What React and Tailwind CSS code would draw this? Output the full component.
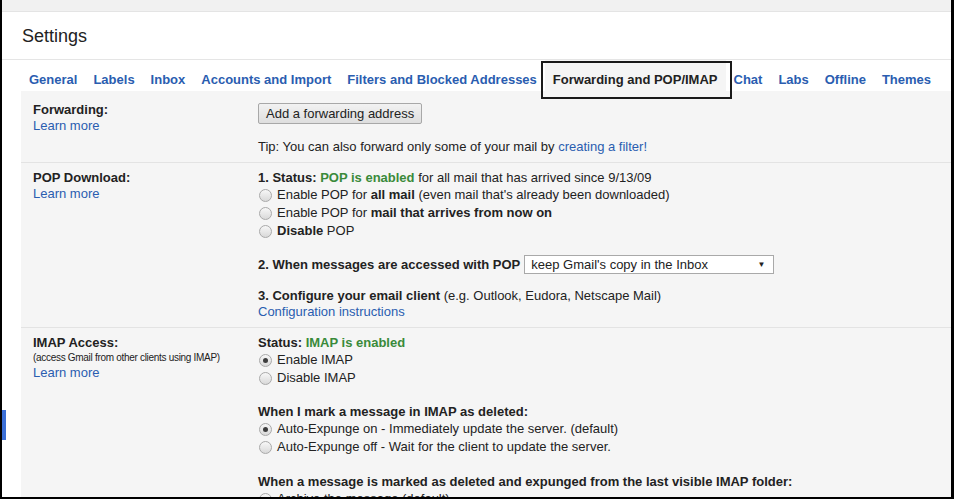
import React from 'react'

const tabs = [
  'General',
  'Labels',
  'Inbox',
  'Accounts and Import',
  'Filters and Blocked Addresses',
  'Forwarding and POP/IMAP',
  'Chat',
  'Labs',
  'Offline',
  'Themes',
]

const Radio = ({ checked, children }) => (
  <div className="h-[18px] flex items-center">
    <span className="ml-px mr-[5px] w-[13px] h-[13px] shrink-0 rounded-full border border-[#a9a9a9] bg-linear-to-b from-[#f7f7f7] to-[#d9d9d9] flex items-center justify-center">
      {checked && <span className="w-[5px] h-[5px] rounded-full bg-[#3d3d3d]" />}
    </span>
    <span>{children}</span>
  </div>
)

const Link = ({ children }) => <span className="text-[#2a5db0] cursor-pointer">{children}</span>

const Green = ({ children }) => <b className="text-[#3a8a3a]">{children}</b>

const Row = ({ label, sub, children, last }) => (
  <div className={`flex pl-3 ${last ? '' : 'border-b border-[#e3e3e3]'}`}>
    <div className="w-[225px] shrink-0 pt-[7px] leading-4">
      <div className="font-bold">{label}</div>
      {sub && <div className="text-[10px] leading-[14px] tracking-[-0.3px]">{sub}</div>}
      <Link>Learn more</Link>
    </div>
    <div className="flex-1 pt-[7px] pb-[7px]">{children}</div>
  </div>
)

export default function App() {
  return (
    <div className="relative w-[954px] h-[499px] overflow-hidden bg-white border-l-2 border-r-[3px] border-b-2 border-black text-[13px] text-[#222] font-['Liberation_Sans',Arial,sans-serif]">
      {/* top strip */}
      <div className="h-[12px] bg-[#f1f1f1] border-b border-[#e4e4e4]" />

      {/* header */}
      <div className="h-[48px] flex items-center pl-5 border-b border-[#e5e5e5]">
        <h1 className="text-[18px] leading-[22px] text-[#222]">Settings</h1>
      </div>

      {/* tabs */}
      <div className="h-[31px] flex items-end pl-[19px]">
        {tabs.map((t) => {
          const active = t === 'Forwarding and POP/IMAP'
          return (
            <div
              key={t}
              className={`relative h-full flex items-end px-2 pb-[3px] leading-4 font-bold ${
                active ? 'bg-[#f5f5f5] text-[#222]' : 'text-[#2a5db0]'
              }`}
            >
              {t}
              {active && (
                <span className="absolute left-[-4px] right-[-6px] top-[1px] bottom-[-8px] border-2 border-[#1a1a1a]" />
              )}
            </div>
          )
        })}
      </div>

      {/* content */}
      <div className="ml-[19px] bg-[#f5f5f5] h-full">
        {/* Forwarding */}
        <div className="flex pl-3 border-b border-[#e3e3e3]">
          <div className="w-[225px] shrink-0 pt-[11px] leading-4">
            <div className="font-bold">Forwarding:</div>
            <Link>Learn more</Link>
          </div>
          <div className="flex-1 pt-3 pb-[7px]">
            <button className="h-[21px] px-[7px] border border-[#a8a8a8] rounded-[2px] bg-linear-to-b from-[#f2f2f2] to-[#dedede] text-[13px] leading-[19px] text-[#222]">
              Add a forwarding address
            </button>
            <div className="mt-[15px] leading-4">
              Tip: You can also forward only some of your mail by <Link>creating a filter!</Link>
            </div>
          </div>
        </div>

        {/* POP */}
        <Row label="POP Download:">
          <div className="leading-4">
            <b>1. Status: </b>
            <Green>POP is enabled</Green> for all mail that has arrived since 9/13/09
          </div>
          <Radio>
            Enable POP for <b>all mail</b> (even mail that's already been downloaded)
          </Radio>
          <Radio>
            Enable POP for <b>mail that arrives from now on</b>
          </Radio>
          <Radio>
            <b>Disable</b> POP
          </Radio>
          <div className="mt-[15px] h-[19px] flex items-center">
            <b>2. When messages are accessed with POP</b>
            <div className="ml-[4px] w-[250px] h-[19px] bg-white border border-[#a9a9a9] flex items-center justify-between pl-[6px] pr-[8px]">
              <span>keep Gmail's copy in the Inbox</span>
              <span className="text-[8px]">▼</span>
            </div>
          </div>
          <div className="mt-[14px] leading-4">
            <b>3. Configure your email client</b> (e.g. Outlook, Eudora, Netscape Mail)
          </div>
          <div className="leading-4">
            <Link>Configuration instructions</Link>
          </div>
        </Row>

        {/* IMAP */}
        <Row label="IMAP Access:" sub="(access Gmail from other clients using IMAP)" last>
          <div className="leading-4">
            <b>Status: </b>
            <Green>IMAP is enabled</Green>
          </div>
          <Radio checked>Enable IMAP</Radio>
          <Radio>Disable IMAP</Radio>
          <div className="mt-[17px] leading-4 font-bold">When I mark a message in IMAP as deleted:</div>
          <Radio checked>Auto-Expunge on - Immediately update the server. (default)</Radio>
          <Radio>Auto-Expunge off - Wait for the client to update the server.</Radio>
          <div className="mt-[18px] leading-4 font-bold">
            When a message is marked as deleted and expunged from the last visible IMAP folder:
          </div>
          <Radio>Archive the message (default)</Radio>
        </Row>
      </div>

      {/* edge marker */}
      <div className="absolute left-0 top-[410px] w-[4px] h-[30px] bg-[#3b6fd6]" />
    </div>
  )
}
